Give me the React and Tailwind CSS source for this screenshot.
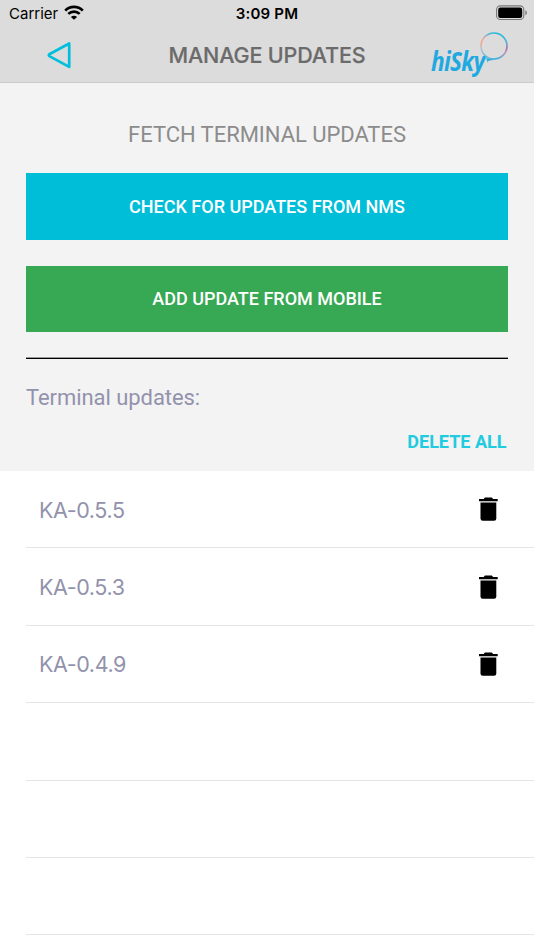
const updates = ["KA-0.5.5", "KA-0.5.3", "KA-0.4.9"];

function Wifi() {
  return (
    <svg className="mb-[3px] ml-[6px] h-[15px] w-[20px]" viewBox="0 0 20 15" fill="none">
      <path d="M1.2 5.6C6.2 .7 13.8 .7 18.8 5.6" stroke="#000" strokeWidth="2.7" />
      <path d="M4.3 8.9c3.2-3.1 8.2-3.1 11.4 0" stroke="#000" strokeWidth="2.6" />
      <path d="M10 14.8L6.9 11.9c1.8-1.6 4.4-1.6 6.2 0z" fill="#000" />
    </svg>
  );
}

function Battery() {
  return (
    <svg className="mb-[2px] h-[16px] w-[32px]" viewBox="0 0 32 16" fill="none">
      <rect x=".6" y=".9" width="27.2" height="13.6" rx="3.8" stroke="#777" strokeWidth="1.1" />
      <rect x="2.2" y="2.5" width="24" height="10.4" rx="2.2" fill="#000" />
      <path d="M29.4 5.2c2 .9 2 4.1 0 5z" fill="#777" />
    </svg>
  );
}

function BackArrow() {
  return (
    <svg className="h-[28px] w-[26px]" viewBox="0 0 26 28" fill="none">
      <path d="M22.2 2.5V25.9L2.8 15.4Q0.8 14.2 2.8 13Z" stroke="#00bfdc" strokeWidth="2.7" strokeLinejoin="round" />
    </svg>
  );
}

function Logo() {
  return (
    <div className="relative h-[50px] w-[80px] font-['Open_Sans',sans-serif]">
      <span className="absolute top-[14px] left-[2px] origin-left scale-x-[0.87] text-[26px] leading-[34px] font-bold italic tracking-[-0.8px] whitespace-nowrap text-[#1fa9e1]">
        hiSky
      </span>
      <svg className="absolute top-px left-[50px] h-[34px] w-[31px]" viewBox="0 0 31 34" fill="none">
        <defs>
          <linearGradient id="ring-left" x1="0" y1="1" x2="0" y2="0">
            <stop offset="0" stopColor="#45b5df" />
            <stop offset=".4" stopColor="#b9bfd0" />
            <stop offset=".6" stopColor="#f3a48c" />
            <stop offset=".8" stopColor="#e7a898" />
            <stop offset="1" stopColor="#30b9dc" />
          </linearGradient>
          <linearGradient id="ring-right" x1="0" y1="0" x2="0" y2="1">
            <stop offset="0" stopColor="#20bada" />
            <stop offset=".35" stopColor="#52b7d6" />
            <stop offset=".58" stopColor="#ad71ab" />
            <stop offset=".78" stopColor="#c394bc" />
            <stop offset="1" stopColor="#3db0df" />
          </linearGradient>
        </defs>
        <path d="M15 28A13 13 0 1 1 15 2" stroke="url(#ring-left)" strokeWidth="1.5" />
        <path d="M15 2a13 13 0 0 1 0 26" stroke="url(#ring-right)" strokeWidth="1.7" />
        <path d="M7 27q4 2.2 10 .8-4 2-6.5 1.8-1.7 0-1.7 2Z" fill="#25aae2" />
      </svg>
    </div>
  );
}

function Trash() {
  return (
    <svg className="mr-[36px] h-[24px] w-[19px]" viewBox="0 0 19 24" fill="#000">
      <path d="M0 2h4.7L5.9.6h6.9L14.1 2h4.6v2.3H0z" />
      <path d="M1.5 5.6h15.8v15.8q0 2.3-2.3 2.3H3.8q-2.3 0-2.3-2.3z" />
    </svg>
  );
}

export default function App() {
  return (
    <main className="flex h-[950px] w-[534px] flex-col overflow-hidden bg-white font-['Roboto',sans-serif]">
      <header className="h-[83px] shrink-0 border-b border-[#cbcbcb] bg-[#dcdcdc] font-['Inter',sans-serif]">
        <div className="grid h-[28px] grid-cols-3 items-center text-black">
          <div className="flex items-center pl-[9px]">
            <span className="text-[15px]">Carrier</span>
            <Wifi />
          </div>
          <span className="text-center text-[15px] font-semibold tracking-[0.2px]">3:09 PM</span>
          <div className="flex justify-end pr-[6px]">
            <Battery />
          </div>
        </div>
        <div className="grid h-[54px] grid-cols-[120px_1fr_120px] items-start">
          <div className="flex h-[54px] items-center pl-[47px]">
            <BackArrow />
          </div>
          <h1 className="text-center text-[21.5px] leading-[54px] font-medium tracking-[-0.15px] whitespace-nowrap text-[#6b6b6b] [-webkit-text-stroke:0.2px_#6b6b6b]">
            MANAGE UPDATES
          </h1>
          <div className="pt-[2px] pl-[15px]">
            <Logo />
          </div>
        </div>
      </header>

      <section className="flex h-[388px] shrink-0 flex-col bg-[#f3f3f3] px-[26px]">
        <h2 className="pt-[37px] text-center text-[22px] leading-[30px] tracking-[-0.04px] text-[#8c8c8c]">FETCH TERMINAL UPDATES</h2>
        <button className="mt-[23px] h-[67px] shrink-0 bg-[#00bdd8] text-[18px] font-medium text-white">
          CHECK FOR UPDATES FROM NMS
        </button>
        <button className="mt-[25.5px] h-[66.5px] shrink-0 bg-[#37a853] text-[18px] font-medium text-white">
          ADD UPDATE FROM MOBILE
        </button>
        <div className="mt-[25px] h-[2px] shrink-0 border-t border-[#999] bg-black" />
        <p className="mt-[24px] text-[22px] leading-[30px] tracking-[-0.06px] text-[#9292ac]">Terminal updates:</p>
        <button className="mt-[17px] mr-[1.5px] self-end text-[18px] leading-[24px] font-bold text-[#20cbe0]">DELETE ALL</button>
      </section>

      <ul className="flex flex-col pl-[26px] font-['Inter',sans-serif]">
        {updates.map((name) => (
          <li key={name} className="flex h-[77.4px] shrink-0 items-center justify-between border-b border-[#e4e4e6] pl-[13px]">
            <span className="pt-px text-[21.5px] tracking-[-0.4px] text-[#9292ac]">{name}</span>
            <Trash />
          </li>
        ))}
        <li className="h-[77.4px] shrink-0 border-b border-[#e4e4e6]" />
        <li className="h-[77.4px] shrink-0 border-b border-[#e4e4e6]" />
        <li className="h-[77.4px] shrink-0 border-b border-[#e4e4e6]" />
      </ul>
    </main>
  );
}
